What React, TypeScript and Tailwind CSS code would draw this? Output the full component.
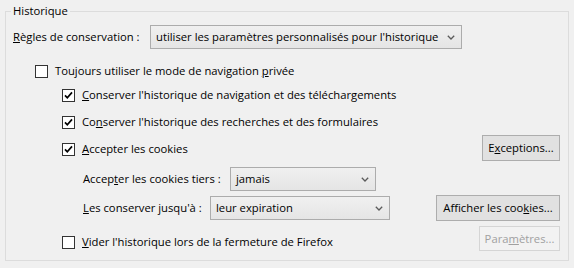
import React from "react";

const Chevron = () => (
  <svg width="8" height="5" viewBox="0 0 8 5" className="shrink-0">
    <path d="M0.8 0.8 L4 4 L7.2 0.8" fill="none" stroke="#5a5a5a" strokeWidth="1.3" />
  </svg>
);

const Select = ({ text, w }: { text: string; w: string }) => (
  <div
    className={`${w} h-[24px] border border-[#acacac] bg-gradient-to-b from-[#f0f0f0] to-[#e5e5e5] flex items-center pl-[5px] pr-[6px] justify-between`}
  >
    <span className="whitespace-nowrap">{text}</span>
    <Chevron />
  </div>
);

const Box = ({ checked }: { checked?: boolean }) => (
  <div className="w-[13px] h-[13px] border border-[#333333] bg-white flex items-center justify-center shrink-0">
    {checked && (
      <svg width="11" height="11" viewBox="0 0 11 11">
        <path d="M2 5.3 L4.3 7.8 L9 2.4" fill="none" stroke="#000" strokeWidth="1.7" />
      </svg>
    )}
  </div>
);

const Check = ({ checked, children }: { checked?: boolean; children: React.ReactNode }) => (
  <div className="flex items-center gap-[7px] h-[16px]">
    <Box checked={checked} />
    <span className="whitespace-nowrap">{children}</span>
  </div>
);

const Button = ({
  children,
  w,
  disabled,
}: {
  children: React.ReactNode;
  w: string;
  disabled?: boolean;
}) => (
  <div
    className={
      disabled
        ? `${w} h-[25px] border border-[#d5d5d5] bg-[#f2f2f2] text-[#a0a0a0] flex items-center justify-center`
        : `${w} h-[26px] border border-[#adadad] bg-[#e1e1e1] flex items-center justify-center`
    }
  >
    <span className="whitespace-nowrap">{children}</span>
  </div>
);

export default function App() {
  return (
    <div
      className="w-[574px] h-[268px] bg-[#f0f0f0] pt-[3px] pl-[5px] text-[11.25px] leading-[16px] text-black"
      style={{ fontFamily: '"Open Sans", "Noto Sans", sans-serif' }}
    >
      <fieldset className="w-[564px] h-[258px] border border-[#dcdcdc] p-0 m-0">
        <legend className="ml-[5px] px-[2px] leading-[16px]">Historique</legend>
        <div className="pt-[6px] pl-[7px] pr-[8px] flex flex-col">
          <div className="flex items-center h-[24px]">
            <span className="w-[137px] whitespace-nowrap">
              <u>R</u>ègles de conservation :
            </span>
            <Select w="w-[312px]" text="utiliser les paramètres personnalisés pour l'historique" />
          </div>

          <div className="flex items-center h-[24px] mt-[10px] pl-[22px]">
            <Check>
              Toujours utiliser le mode de navigation <u>p</u>rivée
            </Check>
          </div>

          <div className="flex items-center h-[24px] pl-[49px]">
            <Check checked>
              <u>C</u>onserver l'historique de navigation et des téléchargements
            </Check>
          </div>

          <div className="flex items-center h-[24px] mt-[3px] pl-[49px]">
            <Check checked>
              Co<u>n</u>server l'historique des recherches et des formulaires
            </Check>
          </div>

          <div className="flex items-center justify-between h-[26px] mt-[1px] pl-[49px]">
            <div className="mt-[2px]">
              <Check checked>
                <u>A</u>ccepter les cookies
              </Check>
            </div>
            <Button w="w-[78px]">
              E<u>x</u>ceptions...
            </Button>
          </div>

          <div className="flex items-center h-[24px] mt-[6px] pl-[70px]">
            <span className="w-[147px] whitespace-nowrap">
              Accep<u>t</u>er les cookies tiers :
            </span>
            <Select w="w-[146px]" text="jamais" />
          </div>

          <div className="flex items-center justify-between h-[26px] mt-[4px] pl-[70px]">
            <div className="flex items-center">
              <span className="w-[127px] whitespace-nowrap">
                <u>L</u>es conserver jusqu'à :
              </span>
              <Select w="w-[180px]" text="leur expiration" />
            </div>
            <Button w="w-[124px]">
              Afficher les coo<u>k</u>ies...
            </Button>
          </div>

          <div className="flex items-start justify-between h-[25px] mt-[5px] pl-[49px]">
            <div className="mt-[8px]">
              <Check>
                <u>V</u>ider l'historique lors de la fermeture de Firefox
              </Check>
            </div>
            <Button w="w-[81px]" disabled>
              Para<u>m</u>ètres...
            </Button>
          </div>
        </div>
      </fieldset>
    </div>
  );
}
